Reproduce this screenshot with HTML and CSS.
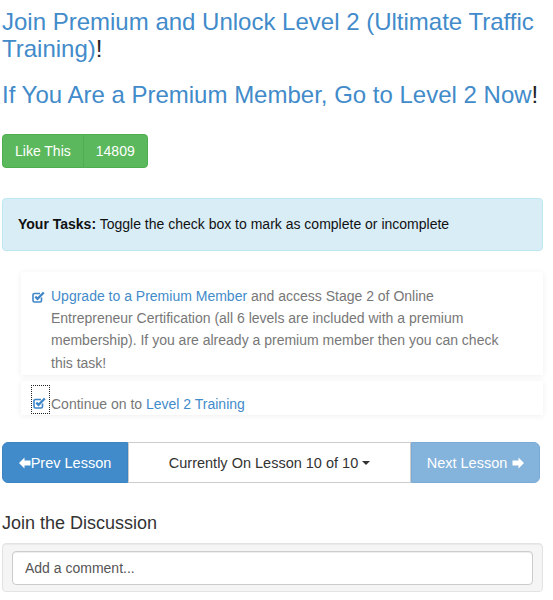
FILE: index.html
```html
<!DOCTYPE html>
<html lang="en">

<head>
    <meta charset="UTF-8">
    <meta name="viewport" content="width=device-width, initial-scale=1.0">
    <title>Level 2 - Lesson 10</title>
    <link rel="stylesheet" href="styles.css">
</head>

<body>
    <div class="page">
        <h3 class="title"><a href="#">Join Premium and Unlock Level 2 (Ultimate Traffic Training)</a>!</h3>
        <h3 class="title title-second"><a href="#">If You Are a Premium Member, Go to Level 2 Now</a>!</h3>

        <div class="like-group">
            <button class="btn-like">Like This</button><button class="btn-like">14809</button>
        </div>

        <div class="alert-info">
            <strong>Your Tasks:</strong> Toggle the check box to mark as complete or incomplete
        </div>

        <ul class="tasks">
            <li class="task">
                <span class="check">
                    <svg width="13" height="12" viewBox="0 0 13 12"><path d="M9.5 6.5v3a1.5 1.5 0 0 1-1.5 1.5H2.5A1.5 1.5 0 0 1 1 9.5V4A1.5 1.5 0 0 1 2.5 2.5H8" fill="none" stroke="#3f86c8" stroke-width="1.6"/><path d="M3.3 5.6l2.2 2.2L11.8 1.5" fill="none" stroke="#3f86c8" stroke-width="2.3"/></svg>
                </span>
                <span class="task-text"><a href="#">Upgrade to a Premium Member</a> and access Stage 2 of Online Entrepreneur Certification (all 6 levels are included with a premium membership). If you are already a premium member then you can check this task!</span>
            </li>
            <li class="task task-last">
                <span class="check check-focus">
                    <svg width="13" height="12" viewBox="0 0 13 12"><path d="M9.5 6.5v3a1.5 1.5 0 0 1-1.5 1.5H2.5A1.5 1.5 0 0 1 1 9.5V4A1.5 1.5 0 0 1 2.5 2.5H8" fill="none" stroke="#3f86c8" stroke-width="1.6"/><path d="M3.3 5.6l2.2 2.2L11.8 1.5" fill="none" stroke="#3f86c8" stroke-width="2.3"/></svg>
                </span>
                <span class="task-text">Continue on to <a href="#">Level 2 Training</a></span>
            </li>
        </ul>

        <div class="pager">
            <a class="pager-btn pager-prev" href="#">
                <svg width="12" height="12" viewBox="0 0 12 12"><path d="M0 6L5.5 0.5V3.5H11.5V8.5H5.5V11.5Z" fill="#fff"/></svg>Prev Lesson
            </a>
            <a class="pager-btn pager-current" href="#">Currently On Lesson 10 of 10 <span class="caret"></span></a>
            <a class="pager-btn pager-next" href="#">Next Lesson
                <svg width="12" height="12" viewBox="0 0 12 12"><path d="M12 6L6.5 0.5V3.5H0.5V8.5H6.5V11.5Z" fill="#fff"/></svg>
            </a>
        </div>

        <h4 class="discussion">Join the Discussion</h4>
        <div class="well">
            <input type="text" class="comment-input" placeholder="Add a comment...">
        </div>
    </div>
</body>

</html>
```

FILE: styles.css
```css
body {
    margin: 0;
    background-color: #fff;
    font-family: "Liberation Sans", Arial, sans-serif;
    font-size: 14px;
    color: #333;
}

a {
    color: #428bca;
    text-decoration: none;
}

.page {
    width: 541px;
    margin: 0 2px;
}

.title {
    margin: 9px 0 0;
    font-size: 24px;
    font-weight: normal;
    line-height: 26.5px;
    color: #222;
}

.title-second {
    margin-top: 20px;
}

.like-group {
    display: flex;
    margin-top: 25px;
}

.btn-like {
    height: 34px;
    padding: 6px 12px;
    font-family: inherit;
    font-size: 14px;
    color: #fff;
    background-color: #5cb85c;
    border: 1px solid #4cae4c;
    border-radius: 4px 0 0 4px;
}

.btn-like + .btn-like {
    margin-left: -1px;
    border-radius: 0 4px 4px 0;
}

.alert-info {
    margin-top: 30px;
    padding: 15px;
    line-height: 21px;
    color: #111;
    background-color: #d9edf7;
    border: 1px solid #bce8f1;
    border-radius: 4px;
}

.tasks {
    list-style: none;
    margin: 21px 0 0;
    padding: 0 0 0 19px;
}

.task {
    display: flex;
    align-items: flex-start;
    padding: 13px 10px 1px 11px;
    margin-bottom: 6px;
    background-color: #fff;
    box-shadow: 0 1px 6px rgba(0, 0, 0, 0.07);
    line-height: 22.4px;
    color: #777;
}

.task-last {
    align-items: flex-end;
    padding: 5px 10px 0 11px;
    height: 34px;
    box-sizing: border-box;
}

.check {
    flex: none;
    width: 18px;
    padding-top: 6px;
    line-height: 0;
}

.check-focus {
    height: 27px;
    width: 17px;
    box-sizing: border-box;
    padding: 0 0 4px 1px;
    margin: 0 1px 2px 0;
    display: flex;
    align-items: flex-end;
    outline: 1px dotted #222;
}

.task-text {
    max-width: 462px;
    margin-left: 1px;
}

.pager {
    display: flex;
    width: 538px;
    margin-top: 27px;
}

.pager-btn {
    display: flex;
    align-items: center;
    justify-content: center;
    height: 41px;
    box-sizing: border-box;
    font-size: 14.5px;
    border: 1px solid transparent;
}

.pager-prev {
    width: 126px;
    color: #fff;
    background-color: #428bca;
    border-color: #3d84c3;
    border-radius: 6px 0 0 6px;
}

.pager-current {
    flex: 1;
    color: #333;
    background-color: #fff;
    border-color: #ccc;
}

.pager-next {
    width: 129px;
    gap: 5px;
    color: #fff;
    background-color: #84b3dc;
    border-color: #7aabd7;
    border-radius: 0 6px 6px 0;
}

.caret {
    display: inline-block;
    margin-left: 4px;
    border-top: 4px solid #333;
    border-left: 4px solid transparent;
    border-right: 4px solid transparent;
}

.discussion {
    margin: 30px 0 10px;
    font-size: 18px;
    font-weight: normal;
    line-height: 20px;
    color: #333;
}

.well {
    padding: 7px 9px 6px;
    background-color: #f5f5f5;
    border: 1px solid #e3e3e3;
    border-radius: 4px;
    box-shadow: inset 0 1px 1px rgba(0, 0, 0, 0.05);
}

.comment-input {
    display: block;
    width: 100%;
    height: 34px;
    box-sizing: border-box;
    padding: 6px 12px;
    font-family: inherit;
    font-size: 14px;
    color: #555;
    border: 1px solid #ccc;
    border-radius: 4px;
    box-shadow: inset 0 1px 1px rgba(0, 0, 0, 0.075);
}

.comment-input::placeholder {
    color: #555;
}
```
